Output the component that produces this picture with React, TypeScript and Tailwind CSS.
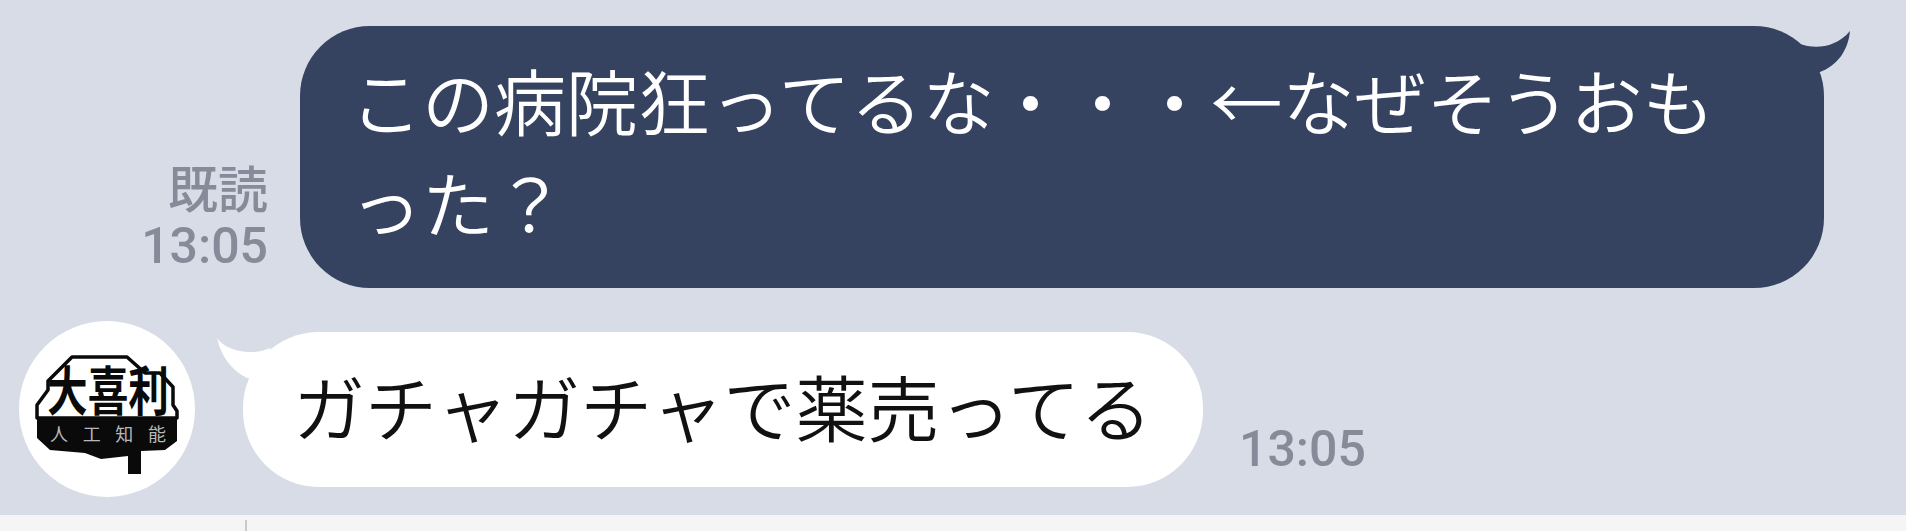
function BubbleTail({ side }: { side: 'left' | 'right' }) {
  if (side === 'right') {
    return (
      <svg className="absolute right-[-28px] top-0 w-[90px] h-[60px]" viewBox="0 0 90 60">
        <path d="M30 26 L38 18 C 50 22 72 24 88 5 C 86 26 74 40 58 46 L 40 50 Z" fill="#354260" />
      </svg>
    );
  }
  return (
    <svg className="absolute left-[-27px] top-0 w-[70px] h-[60px]" viewBox="0 0 70 60">
      <path d="M1 6 C 6 14 20 20 34 20 C 42 20 48 19 54 16 L 60 50 L 31 46 C 15 38 5 24 1 6 Z" fill="#ffffff" />
    </svg>
  );
}

function AvatarLogo() {
  return (
    <div className="w-[176px] h-[176px] rounded-full bg-white shrink-0 flex items-center justify-center">
      <svg className="w-[176px] h-[176px]" viewBox="0 0 176 176">
        <path
          d="M53 36 L108 36 L126 52 L141 52 L154 66 L154 84 L158 90 L158 97 L18 97 L18 84 L29 69 L29 60 Z"
          fill="#ffffff"
          stroke="#0a0a0a"
          strokeWidth="3.5"
          strokeLinejoin="round"
        />
        <path
          d="M18 97 L158 97 L158 120 L146 129 L122 130 L122 153 L109 153 L109 135 L82 138 L66 132 L31 129 L18 117 Z"
          fill="#0a0a0a"
        />
        <text
          x="28"
          y="78"
          transform="scale(1 1.15)"
          textLength="122"
          lengthAdjust="spacingAndGlyphs"
          fontSize="46"
          fontWeight="700"
          fill="#0a0a0a"
          fontFamily="'Noto Sans CJK JP', sans-serif"
        >
          大喜利
        </text>
        <text
          x="31"
          y="120"
          textLength="116"
          fontSize="18"
          fill="#b8b8b8"
          fontFamily="'Noto Sans CJK JP', sans-serif"
        >
          人工知能
        </text>
      </svg>
    </div>
  );
}

export default function App() {
  return (
    <div className="w-[1906px] h-[531px] overflow-hidden bg-[#d7dce6] flex flex-col font-['Noto_Sans_CJK_JP',sans-serif]">
      <div className="flex justify-end items-end pt-[26px] pr-[82px]">
        <div className="flex flex-col items-end mr-[32px] mb-[12px] text-[#858b98] font-medium leading-none">
          <span className="text-[50px] leading-[59px]">既読</span>
          <span className="text-[50px] leading-[60px] font-['Roboto',sans-serif]">13:05</span>
        </div>
        <div className="relative w-[1524px] h-[262px] rounded-[70px] bg-[#354260] pl-[50px] pt-[22px] text-white text-[72px] leading-[102px] font-[350] whitespace-nowrap">
          <BubbleTail side="right" />
          この病院狂ってるな・・・←なぜそうおも
          <br />
          った？
        </div>
      </div>

      <div className="flex items-start pl-[19px] mt-[33px]">
        <AvatarLogo />
        <div className="relative ml-[48px] mt-[11px] w-[960px] h-[155px] rounded-[76px] bg-white pl-[50px] pt-[20px] text-[#111111] text-[72px] leading-[105px] font-[350] whitespace-nowrap">
          <BubbleTail side="left" />
          ガチャガチャで薬売ってる
        </div>
        <span className="ml-[36px] mt-[98px] text-[#858b98] text-[50px] leading-[60px] font-medium font-['Roboto',sans-serif]">
          13:05
        </span>
      </div>

      <div className="mt-auto h-[16px] bg-[#f5f5f5] flex items-end pl-[245px]">
        <div className="w-[2px] h-[11px] bg-[#c9c9c9]" />
      </div>
    </div>
  );
}
